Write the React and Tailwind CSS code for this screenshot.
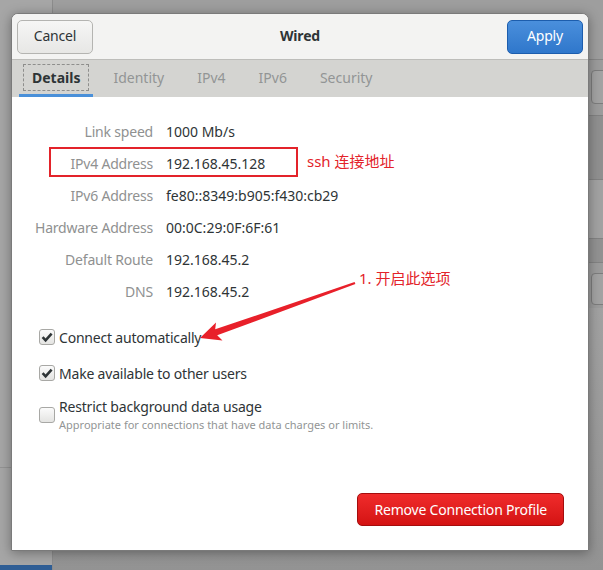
function Check({ checked }) {
  return (
    <div className="w-[16px] h-[16px] shrink-0 rounded-[3px] border border-[#a8a8a5] bg-linear-to-b from-[#fbfbfb] to-[#e4e4e2] flex items-center justify-center">
      {checked && (
        <svg width="12" height="12" viewBox="0 0 12 12">
          <path d="M1.6 6.2 L4.6 9.3 L10.6 2.7" stroke="#2e3436" strokeWidth="2.6" fill="none" strokeLinejoin="miter" />
        </svg>
      )}
    </div>
  );
}

const rows = [
  ["Link speed", "1000 Mb/s"],
  ["IPv4 Address", "192.168.45.128"],
  ["IPv6 Address", "fe80::8349:b905:f430:cb29"],
  ["Hardware Address", "00:0C:29:0F:6F:61"],
  ["Default Route", "192.168.45.2"],
  ["DNS", "192.168.45.2"],
];

const tabs = ["Details", "Identity", "IPv4", "IPv6", "Security"];

export default function App() {
  return (
    <div className="relative w-[603px] h-[570px] overflow-hidden flex bg-[#9c9c9c] font-['Noto_Sans','Noto_Sans_CJK_SC',sans-serif] text-[14px] tracking-[-0.2px]">
      {/* desktop behind */}
      <div className="w-[53px] h-full flex flex-col bg-[#a6a6a6] border-r border-[#8c8c8c]">
        <div className="h-[468px] border-b border-[#939393]" />
        <div className="flex-1" />
        <div className="h-[5px] bg-[#2f5e95]" />
      </div>
      <div className="flex-1 flex flex-col">
        <div className="h-[60px] shrink-0 bg-[#9e9e9e] border-b border-[#878787]" />
        <div className="h-[55px] shrink-0 flex justify-end pt-[10px]">
          <div className="w-[20px] h-[34px] -mr-[8px] rounded-[4px] border border-[#7d7d7d] bg-[#a3a3a3]" />
        </div>
        <div className="h-[65px] shrink-0 bg-[#909090] border-y border-[#828282]" />
        <div className="h-[58px] shrink-0 bg-[#a2a2a2]" />
        <div className="h-[25px] shrink-0 bg-[#929292] border-y border-[#838383]" />
        <div className="h-[45px] shrink-0 flex justify-end pt-[10px]">
          <div className="w-[20px] h-[32px] -mr-[8px] rounded-[4px] border border-[#7d7d7d] bg-[#a3a3a3]" />
        </div>
        <div className="flex-1 bg-linear-to-b from-[#a2a2a2] to-[#939393]" />
      </div>

      {/* dialog window */}
      <div className="absolute left-[11px] top-[13px] w-[578px] h-[538px] flex flex-col rounded-t-[7px] border border-[#7a7a7a] bg-white shadow-[0_2px_12px_rgba(0,0,0,0.35)] overflow-hidden">
        <div className="h-[46px] shrink-0 flex items-center justify-between px-[5px] bg-[#f3f3f2] border-b border-[#bdbdba]">
          <div className="w-[76px] h-[34px] pb-[2px] rounded-[5px] border border-[#b4b4b1] bg-linear-to-b from-[#f6f6f5] to-[#e7e7e5] flex items-center justify-center text-[#2e3436]">
            Cancel
          </div>
          <div className="pb-[3px] font-bold text-[#2e3436]">Wired</div>
          <div className="w-[76px] h-[34px] pb-[2px] rounded-[5px] border border-[#1c5dad] bg-linear-to-b from-[#4a8fdc] to-[#2f77cb] flex items-center justify-center text-white">
            Apply
          </div>
        </div>
        <div className="h-[37px] shrink-0 flex items-stretch gap-[7px] pl-[7px] bg-[#d4d4d1] tracking-normal">
          {tabs.map((t, i) => (
            <div
              key={t}
              className={
                "relative px-[13px] flex items-center border-b-[3px] " +
                (i === 0 ? "border-[#4a90d9] font-bold text-[#2e3436]" : "border-transparent text-[#929595]")
              }
            >
              {i === 0 && <div className="absolute left-[4px] right-[4px] top-[4px] bottom-[3px] border border-dashed border-[#8e8e8c]" />}
              {t}
            </div>
          ))}
        </div>
        <div className="flex-1 flex flex-col">
          <div className="grid grid-cols-[141px_1fr] gap-x-[13px] pt-[18px]">
            {rows.map(([k, v]) => (
              <div key={k} className="contents">
                <div className="h-[32px] flex items-center justify-end text-[#8f9191]">{k}</div>
                <div className="h-[32px] flex items-center text-[#2e3436] tracking-normal">{v}</div>
              </div>
            ))}
          </div>
          <div className="flex flex-col gap-[12px] pl-[27px] mt-[18px] text-[#2e3436]">
            <div className="h-[24px] flex items-center gap-[4px]">
              <Check checked />
              <span>Connect automatically</span>
            </div>
            <div className="h-[24px] flex items-center gap-[4px]">
              <Check checked />
              <span>Make available to other users</span>
            </div>
            <div className="flex items-center gap-[4px]">
              <Check />
              <div className="flex flex-col">
                <span className="leading-[20px]">Restrict background data usage</span>
                <span className="text-[11px] leading-[16px] text-[#929595] tracking-normal">
                  Appropriate for connections that have data charges or limits.
                </span>
              </div>
            </div>
          </div>
          <div className="flex-1" />
          <div className="self-end mr-[24px] mb-[24px] h-[33px] px-[16px] rounded-[5px] border border-[#a50d0d] bg-linear-to-b from-[#f02b2b] to-[#d41212] flex items-center text-white">
            Remove Connection Profile
          </div>
        </div>
      </div>

      {/* annotations */}
      <div className="absolute left-[49px] top-[147px] w-[249px] h-[30px] border-2 border-[#e3232a]" />
      <div className="absolute left-[307px] top-[150px] text-[15px] leading-[22px] tracking-normal text-[#e3232a]">ssh 连接地址</div>
      <div className="absolute left-[359px] top-[267px] text-[15px] leading-[22px] tracking-normal text-[#e3232a]">1. 开启此选项</div>
      <svg className="absolute left-0 top-0" width="603" height="570" viewBox="0 0 603 570">
        <polygon
          points="200,338 216,322.5 215.2,329.3 354.6,282 355.4,284 217.2,335.3 222.5,340.5"
          fill="#e8202a"
        />
      </svg>
    </div>
  );
}
